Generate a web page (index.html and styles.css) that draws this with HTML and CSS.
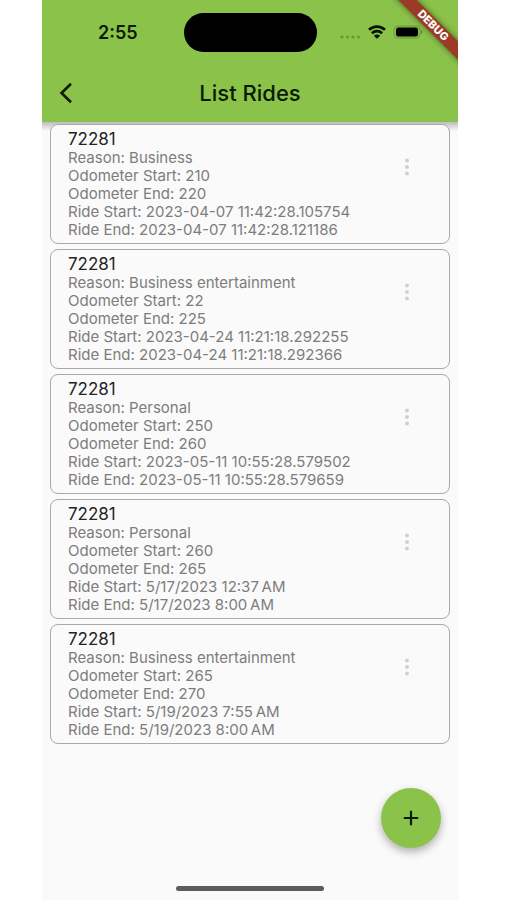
FILE: index.html
```html
<!DOCTYPE html>
<html lang="en">
<head>
<meta charset="utf-8">
<meta name="viewport" content="width=device-width, initial-scale=1">
<title>List Rides</title>
<link rel="stylesheet" href="styles.css">
</head>
<body>
<div class="phone">
  <header class="header">
    <div class="status">
      <span class="time">2:55</span>
      <span class="island"></span>
      <span class="indicators">
        <svg width="22" height="6" viewBox="0 0 22 6" fill="#6a9638"><circle cx="3" cy="3" r="1.6"/><circle cx="8.5" cy="3" r="1.6"/><circle cx="14" cy="3" r="1.6"/><circle cx="19.5" cy="3" r="1.6"/></svg>
        <svg width="18" height="14" viewBox="0 0 18 14" fill="none" stroke="#071404" stroke-width="2.6"><path d="M1 4.800C5.500 .6 12.500 .6 17 4.800"/><path d="M3.900 8.200C6.800 5.400 11.200 5.400 14.100 8.200"/><path d="M9 13.800L5.800 10.700C7.600 9 10.400 9 12.200 10.700Z" fill="#071404" stroke="none"/></svg>
        <svg width="30" height="14" viewBox="0 0 30 14"><rect x="1" y="1" width="26" height="12" rx="4" fill="none" stroke="#6b9739"/><rect x="3" y="2.500" width="22" height="9" rx="2.500" fill="#000"/><path d="M28.200 5v4c1.500-.5 1.500-3.500 0-4Z" fill="#527a29"/></svg>
      </span>
    </div>
    <div class="toolbar">
      <button class="back" aria-label="Back"><svg width="14" height="22" viewBox="0 0 14 22" fill="none" stroke="#0b1b05" stroke-width="2.600"><path d="M12 1.800L2.500 11L12 20.200"/></svg></button>
      <h1 class="title">List Rides</h1>
    </div>
    <div class="debug">DEBUG</div>
  </header>

  <main class="rides">
    <article class="ride">
      <div class="details">
        <h2>72281</h2>
        <p>Reason: Business</p>
        <p>Odometer Start: 210</p>
        <p>Odometer End: 220</p>
        <p>Ride Start: 2023-04-07 11:42:28.105754</p>
        <p>Ride End: 2023-04-07 11:42:28.121186</p>
      </div>
      <button class="more" aria-label="More options"><svg width="6" height="18" viewBox="0 0 6 18" fill="#d0d0d0"><circle cx="3" cy="2.500" r="2"/><circle cx="3" cy="9" r="2"/><circle cx="3" cy="15.500" r="2"/></svg></button>
    </article>
    <article class="ride">
      <div class="details">
        <h2>72281</h2>
        <p>Reason: Business entertainment</p>
        <p>Odometer Start: 22</p>
        <p>Odometer End: 225</p>
        <p>Ride Start: 2023-04-24 11:21:18.292255</p>
        <p>Ride End: 2023-04-24 11:21:18.292366</p>
      </div>
      <button class="more" aria-label="More options"><svg width="6" height="18" viewBox="0 0 6 18" fill="#d0d0d0"><circle cx="3" cy="2.500" r="2"/><circle cx="3" cy="9" r="2"/><circle cx="3" cy="15.500" r="2"/></svg></button>
    </article>
    <article class="ride">
      <div class="details">
        <h2>72281</h2>
        <p>Reason: Personal</p>
        <p>Odometer Start: 250</p>
        <p>Odometer End: 260</p>
        <p>Ride Start: 2023-05-11 10:55:28.579502</p>
        <p>Ride End: 2023-05-11 10:55:28.579659</p>
      </div>
      <button class="more" aria-label="More options"><svg width="6" height="18" viewBox="0 0 6 18" fill="#d0d0d0"><circle cx="3" cy="2.500" r="2"/><circle cx="3" cy="9" r="2"/><circle cx="3" cy="15.500" r="2"/></svg></button>
    </article>
    <article class="ride">
      <div class="details">
        <h2>72281</h2>
        <p>Reason: Personal</p>
        <p>Odometer Start: 260</p>
        <p>Odometer End: 265</p>
        <p>Ride Start: 5/17/2023 12:37&#8239;AM</p>
        <p>Ride End: 5/17/2023 8:00&#8239;AM</p>
      </div>
      <button class="more" aria-label="More options"><svg width="6" height="18" viewBox="0 0 6 18" fill="#d0d0d0"><circle cx="3" cy="2.500" r="2"/><circle cx="3" cy="9" r="2"/><circle cx="3" cy="15.500" r="2"/></svg></button>
    </article>
    <article class="ride">
      <div class="details">
        <h2>72281</h2>
        <p>Reason: Business entertainment</p>
        <p>Odometer Start: 265</p>
        <p>Odometer End: 270</p>
        <p>Ride Start: 5/19/2023 7:55&#8239;AM</p>
        <p>Ride End: 5/19/2023 8:00&#8239;AM</p>
      </div>
      <button class="more" aria-label="More options"><svg width="6" height="18" viewBox="0 0 6 18" fill="#d0d0d0"><circle cx="3" cy="2.500" r="2"/><circle cx="3" cy="9" r="2"/><circle cx="3" cy="15.500" r="2"/></svg></button>
    </article>
  </main>

  <button class="add" aria-label="Add ride"><svg width="16" height="16" viewBox="0 0 16 16" stroke="#0b1b05" stroke-width="2.200"><path d="M8 .8v14.400M.8 8h14.400"/></svg></button>
  <div class="home"></div>
</div>
</body>
</html>
```
FILE: styles.css
```css
* {
  box-sizing: border-box;
}

body {
  margin: 0;
  padding: 0 49px 0 42px;
  background: #fff;
  font-family: Inter, "Liberation Sans", sans-serif;
}

h1, h2, p {
  margin: 0;
}

button {
  padding: 0;
  border: 0;
  background: none;
}

svg {
  display: block;
}

.phone {
  position: relative;
  display: flex;
  flex-direction: column;
  min-height: 100vh;
  background: #fafafa;
}

.header {
  position: relative;
  overflow: hidden;
  background: #8bc34a;
  color: #0b1b05;
}

.rides {
  display: flex;
  flex-direction: column;
  gap: 5px;
  padding: 2px 8px 0;
  background: linear-gradient(#bcbcbc, #fafafa 9px);
}

.status {
  display: grid;
  grid-template-columns: 1fr 133px 1fr;
  align-items: center;
  height: 64px;
}

.time {
  padding-left: 10px;
  text-align: center;
  font-size: 18px;
  font-weight: 600;
}

.island {
  height: 39px;
  border-radius: 20px;
  background: #000;
}

.indicators {
  display: flex;
  align-items: center;
  gap: 7px;
  padding-left: 22px;
}

.indicators svg:first-child {
  margin-top: 9px;
}

.toolbar {
  display: grid;
  grid-template-columns: 48px 1fr 48px;
  align-items: center;
  height: 58px;
}

.back {
  justify-self: center;
}

.title {
  text-align: center;
  font-size: 22px;
  font-weight: 500;
}

.debug {
  position: absolute;
  top: 19px;
  right: -35px;
  width: 120px;
  background: #9b3b25;
  box-shadow: 0 0 6px rgba(0, 0, 0, 0.5);
  color: #fff;
  font-size: 11px;
  font-weight: 800;
  line-height: 13px;
  text-align: center;
  transform: rotate(45deg);
}

.ride {
  display: flex;
  justify-content: space-between;
  align-items: flex-start;
  padding: 4px 32px 4px 17px;
  border: 1px solid #a9a9a9;
  border-radius: 8px;
  background: #fafafa;
}

.ride h2 {
  color: #242424;
  font-size: 17px;
  font-weight: 400;
  line-height: 20px;
}

.ride p {
  color: #7d7d7d;
  font-size: 15px;
  line-height: 18px;
}

.more {
  display: grid;
  place-items: center;
  width: 20px;
  height: 76px;
}

.add {
  position: absolute;
  right: 17px;
  bottom: 52px;
  display: grid;
  place-items: center;
  width: 60px;
  height: 60px;
  border-radius: 50%;
  background: #8bc34a;
  box-shadow: 0 4px 8px rgba(0, 0, 0, 0.3);
}

.home {
  align-self: center;
  width: 148px;
  height: 5px;
  margin-top: auto;
  margin-bottom: 9px;
  border-radius: 3px;
  background: #5c5c5c;
}
```
